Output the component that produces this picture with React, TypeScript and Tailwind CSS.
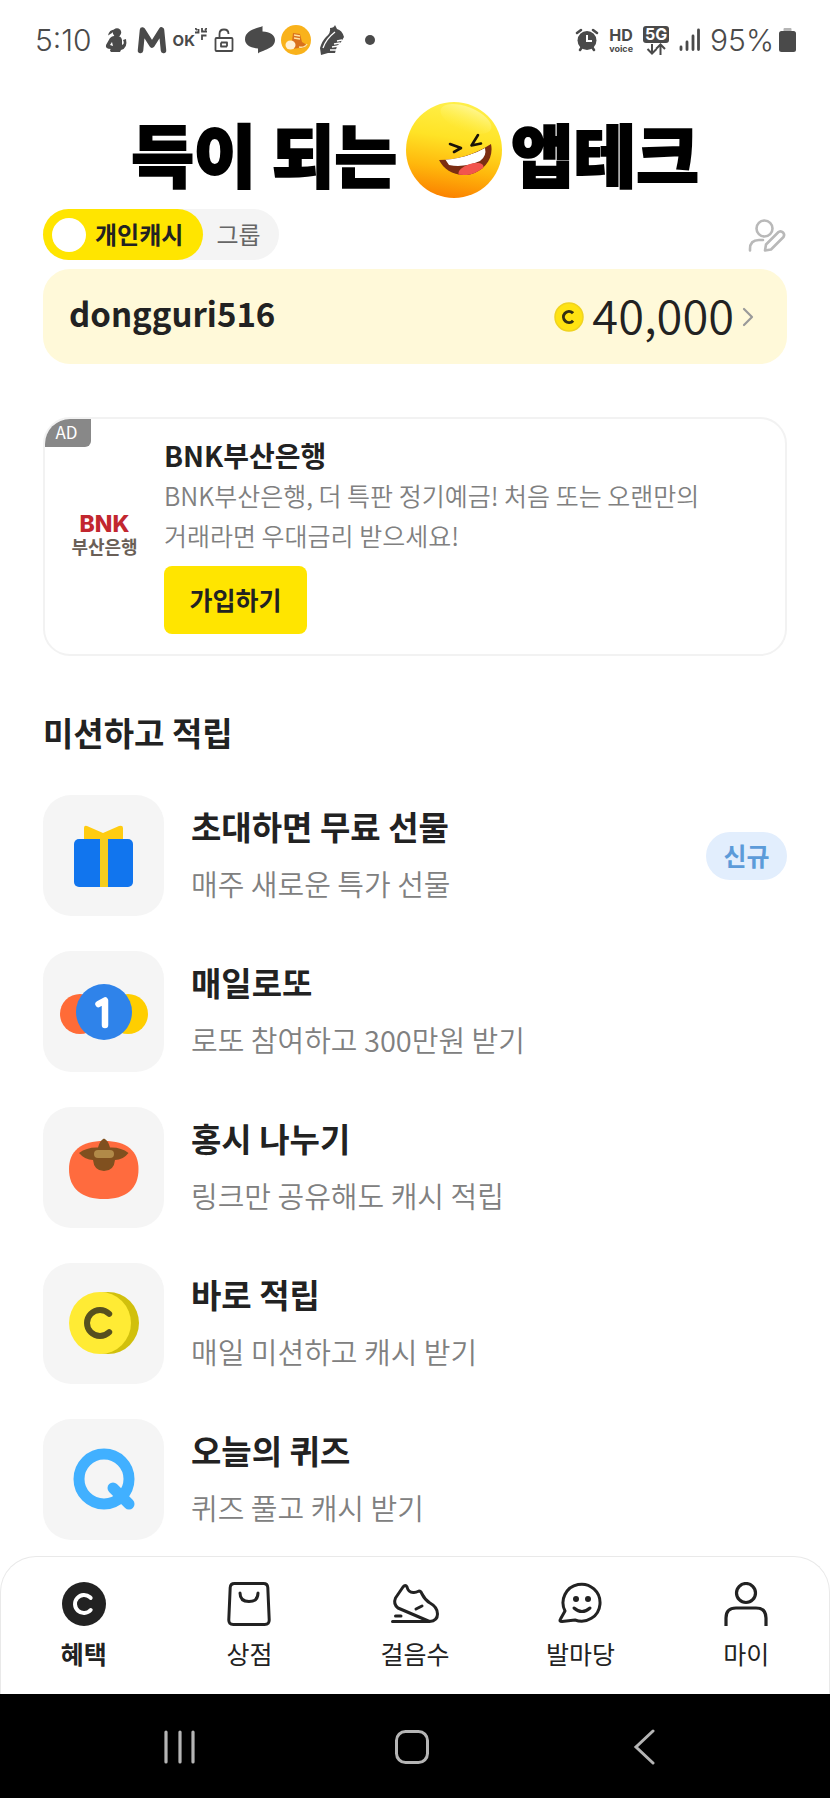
import React from 'react';

const fontKr = 'font-["Noto_Sans_CJK_KR",sans-serif]';

/* Status bar */

const LeftStatusIcons = () => (
  <div className="flex items-center text-[#4a4a4a]">
    <svg className="mx-[3px] h-[30px] w-[30px]" viewBox="0 0 30 30" fill="currentColor" aria-hidden="true">
      <circle cx="16" cy="7.500" r="4.200" />
      <path d="M14 4.500q-6 0-7 6l4-2.500z" />
      <path d="M13 11q7-1 8 4l0 5q3-1 1-5l3-1q2 9-5 11l-1 2H10q-2-2 0-3-6 0-5-4l4-7q2-2 4-2zm-2 6l-2 3 3 1z" fillRule="evenodd" />
    </svg>
    <svg className="mx-[3px] h-[30px] w-[30px]" viewBox="0 0 30 30" fill="none" stroke="currentColor" strokeWidth="5.500" strokeLinecap="round" strokeLinejoin="round" aria-hidden="true">
      <polyline points="3.500,25.500 5.500,5 15,20 24.500,5 26.500,25.500" />
    </svg>
    <div className="mx-[3px] flex h-[30px] w-[30px] items-center">
      <span className="font-[Inter,sans-serif] text-[15px] leading-none font-bold">OK</span>
      <svg className="mb-3 h-3 w-3 shrink-0" viewBox="0 0 12 12" fill="none" stroke="currentColor" strokeWidth="1.800" aria-hidden="true">
        <path d="M0 4.500h3.500V1M7 0v3.500h5M0 0l2 2M12 0l-2 2M7 12V7.500h4.500" />
      </svg>
    </div>
    <svg className="mx-[3px] h-[30px] w-[30px]" viewBox="0 0 30 30" fill="none" stroke="currentColor" strokeWidth="1.800" strokeLinejoin="round" aria-hidden="true">
      <rect x="6.500" y="13" width="17" height="13" rx="1" />
      <path d="M10.500 13V9q0-4.500 4.500-4.500T19.500 9M12 17.500h6v4M18 21.500h-6v-4" />
    </svg>
    <svg className="mx-[3px] h-[30px] w-[30px]" viewBox="0 0 30 30" fill="currentColor" aria-hidden="true">
      <path d="M17.500 1C15 3 0 4 0 14.500 0 20 6 23 13 23.500V28.500C17 25 30 24 30 15 30 10 25 7 17.500 6.500z" />
    </svg>
    <svg className="mx-[3px] h-[30px] w-[30px]" viewBox="0 0 30 30" aria-hidden="true">
      <circle cx="15" cy="15" r="15" fill="#f9b21b" />
      <path d="M12 8l7 1 2 8 5 3q-3 4-8 3l-8 1z" fill="#d9701c" />
      <path d="M18 22q6 1 8-3M13 10l6 1M13 13l6 1" stroke="#ffe5a3" strokeWidth="1.400" fill="none" />
      <ellipse cx="9.500" cy="20" rx="5" ry="4.500" fill="#fff0d5" />
    </svg>
    <svg className="mx-[3px] h-[30px] w-[30px]" viewBox="0 0 30 30" aria-hidden="true">
      <path d="M18 0l2 4q5 1 7 8l-3 5-4 4-2 7-7 0-7 2-1-7q2-7 6-11 5-4 4-9 4 0 5-3z" fill="currentColor" />
      <path d="M20 16l5-1M17 19l6-1M15 22l6-1M13 25h7M6 23q3-9 12-16" stroke="#fff" strokeWidth="1.300" fill="none" />
    </svg>
    <svg className="mx-[3px] h-[30px] w-[30px]" viewBox="0 0 30 30" fill="currentColor" aria-hidden="true">
      <circle cx="17" cy="15" r="5" />
    </svg>
  </div>
);

const StatusBar = () => (
  <div className="flex h-[80px] items-center justify-between pr-[34px] pl-[35px] text-[#4a4a4a]">
    <div className="flex items-center gap-[6px]">
      <span className="font-[Inter,sans-serif] text-[30px] leading-none font-light">5:10</span>
      <LeftStatusIcons />
    </div>
    <div className="flex items-center gap-[10px]">
      <svg className="h-6 w-6" viewBox="0 0 24 24" aria-hidden="true">
        <g stroke="currentColor" strokeWidth="2.600" strokeLinecap="round">
          <path d="M2 5l4-3M22 5l-4-3M5 22l2-3M19 22l-2-3" />
        </g>
        <circle cx="12" cy="12.500" r="9.500" fill="currentColor" />
        <path d="M12 7v6h5" stroke="#fff" strokeWidth="2" fill="none" />
      </svg>
      <div className="flex flex-col items-center font-[Inter,sans-serif] font-bold">
        <span className="text-[16px] leading-[16px]">HD</span>
        <span className="text-[9px] leading-[11px]">voice</span>
      </div>
      <div className="flex flex-col items-center">
        <span className="w-[26px] rounded-[3px] bg-[#4a4a4a] text-center font-[Inter,sans-serif] text-[16px] leading-[17px] font-bold text-white">5G</span>
        <svg className="h-3 w-5" viewBox="0 0 20 12" fill="none" stroke="currentColor" strokeWidth="2" aria-hidden="true">
          <path d="M6 1v9M1.500 6L6 10.500 10.500 6M14.500 12V2M10 6l4.500-4.500L19 6" />
        </svg>
      </div>
      <svg className="h-6 w-[21px]" viewBox="0 0 21 24" fill="none" stroke="currentColor" strokeWidth="2.800" strokeLinecap="round" aria-hidden="true">
        <path d="M2 19v2.500M8 14v7.500M14 8v13.500M19.500 2v19.500" />
      </svg>
      <div className="flex items-center gap-[5px]">
        <span className="font-[Inter,sans-serif] text-[30px] leading-none font-light">95%</span>
        <svg className="h-6 w-[17px]" viewBox="0 0 17 24" aria-hidden="true">
          <rect x="4.500" y="0" width="8" height="4" rx="1" fill="#b5b5b5" />
          <rect x="0" y="3" width="17" height="21" rx="2.500" fill="currentColor" />
        </svg>
      </div>
    </div>
  </div>
);

const LaughingFace = () => (
  <svg className="h-24 w-24" viewBox="0 0 96 96" aria-hidden="true">
    <defs>
      <linearGradient id="face" x1="0.600" y1="0" x2="0.450" y2="1">
        <stop offset="0" stopColor="#fff04a" />
        <stop offset="0.380" stopColor="#ffe326" />
        <stop offset="0.700" stopColor="#ffb80c" />
        <stop offset="1" stopColor="#fb8200" />
      </linearGradient>
      <linearGradient id="shine" x1="0" y1="0" x2="0" y2="1">
        <stop offset="0" stopColor="#fff9a8" stopOpacity="0.700" />
        <stop offset="1" stopColor="#fff35a" stopOpacity="0" />
      </linearGradient>
      <clipPath id="mouth">
        <path d="M33 58Q60 58 85 42C88 56 79 69 64 72.500 49 75 38 68 33 58z" />
      </clipPath>
    </defs>
    <circle cx="48" cy="48" r="48" fill="url(#face)" />
    <ellipse cx="60" cy="17" rx="27" ry="12" transform="rotate(22 60 17)" fill="url(#shine)" />
    <g clipPath="url(#mouth)">
      <rect x="30" y="38" width="60" height="40" fill="#7c2d12" />
      <path d="M39 57Q62 56 79 46 81 54 74 59 58 66 43 63z" fill="#fff" />
      <ellipse cx="65" cy="68" rx="13" ry="6" transform="rotate(-18 65 68)" fill="#f2554d" />
    </g>
    <path d="M44 42L55 46 48 50M72 33L65.500 43.500 75 41.500" fill="none" stroke="#1a1408" strokeWidth="2.600" strokeLinecap="round" strokeLinejoin="round" />
  </svg>
);

/* Mission icons */

const GiftIcon = () => (
  <svg viewBox="0 0 121 121" aria-hidden="true">
    <path d="M41 46V33q0-3 3-2l16 7 16-7q4-1 4 2v13z" fill="#ffcc11" />
    <rect x="31" y="44" width="59" height="48" rx="5" fill="#1175ee" />
    <rect x="57" y="43" width="8" height="49" fill="#f5cd1c" />
  </svg>
);

const LottoIcon = () => (
  <svg viewBox="0 0 121 121" aria-hidden="true">
    <circle cx="37" cy="63" r="20" fill="#ff6b37" />
    <circle cx="85" cy="63" r="20" fill="#ffce00" />
    <circle cx="61" cy="61" r="28" fill="#2f83ea" />
    <polyline points="55.500,53 62,49.500 62,74" fill="none" stroke="#fff" strokeWidth="6.500" strokeLinecap="round" strokeLinejoin="round" />
  </svg>
);

const PersimmonIcon = () => (
  <svg viewBox="0 0 121 121" aria-hidden="true">
    <path d="M61 34C84 34 95.500 44 95.500 62 95.500 82 83 92 61 92S26 82 26 62C26 44 38 34 61 34z" fill="#ff6b3e" />
    <path d="M61 31.500Q65 33 67 40.500 78 40 85.500 46 80 53 72 53 71 64 61 64T50 53Q42 53 36 46 44 40 55 40.500 57 33 61 31.500z" fill="#80501f" />
    <rect x="51" y="43" width="20" height="8" rx="4" fill="#b18a48" />
  </svg>
);

const CoinIcon = () => (
  <svg viewBox="0 0 121 121" aria-hidden="true">
    <circle cx="65" cy="60" r="31" fill="#d1c00c" />
    <circle cx="57" cy="60" r="31" fill="#ffeb34" />
    <circle cx="57" cy="60" r="13" fill="none" stroke="#56501f" strokeWidth="6" strokeLinecap="round" pathLength="360" strokeDasharray="270 90" transform="rotate(45 57 60)" />
  </svg>
);

const QuizIcon = () => (
  <svg viewBox="0 0 121 121" fill="none" stroke="#41b0ff" strokeWidth="11" strokeLinecap="round" aria-hidden="true">
    <circle cx="61" cy="60" r="25" />
    <line x1="70" y1="69" x2="86" y2="85" />
  </svg>
);

/* Bottom tab icons */

const BenefitIcon = () => (
  <svg className="h-11 w-12" viewBox="-2 0 48 44" aria-hidden="true">
    <circle cx="22" cy="22" r="22" fill="#222" />
    <circle cx="22" cy="22" r="9" fill="none" stroke="#fff" strokeWidth="4" strokeLinecap="round" pathLength="360" strokeDasharray="276 84" transform="rotate(42 22 22)" />
  </svg>
);

const ShopIcon = () => (
  <svg className="h-11 w-12" viewBox="-2 0 48 44" fill="none" stroke="#222" strokeWidth="3" strokeLinecap="round" aria-hidden="true">
    <path d="M7.500 1.500h29q4 0 4.300 4l1.400 32q.3 5-4.500 5H6.300q-4.800 0-4.500-5l1.400-32q.3-4 4.300-4z" />
    <path d="M13 11q0 8.500 9 8.500t9-8.500" />
  </svg>
);

const ShoeIcon = () => (
  <svg className="h-11 w-12" viewBox="0 0 48 44" fill="none" stroke="#222" strokeWidth="3" strokeLinecap="round" strokeLinejoin="round" aria-hidden="true">
    <path d="M1.500 39.500H38.500L7 26Q2 22 4.500 16L12 5q2.500-3 4 0 1.500 6 7 5.500 2 0 5-1.500 2 0 3 3 3 6 8 9 7.500 4 7.500 11 0 7-8 7.500" />
    <path d="M25 27l6-3M4.500 34H10" />
  </svg>
);

const ChatIcon = () => (
  <svg className="h-11 w-12" viewBox="-2 0 48 44" fill="none" stroke="#222" strokeWidth="3" strokeLinecap="round" strokeLinejoin="round" aria-hidden="true">
    <path d="M6 29A18.500 18.500 0 1 1 16 38L3 39.500Q0 39.500 1.500 37z" />
    <path d="M15 26q8 7 16 0" />
    <circle cx="17" cy="17" r="3" fill="#222" stroke="none" />
    <circle cx="29" cy="17" r="3" fill="#222" stroke="none" />
  </svg>
);

const MyIcon = () => (
  <svg className="h-11 w-12" viewBox="-2 0 48 44" fill="none" stroke="#222" strokeWidth="3.200" aria-hidden="true">
    <circle cx="22" cy="11" r="9.500" />
    <path d="M2 44v-8q0-10 10-10h20q10 0 10 10v8" />
  </svg>
);

const missions = [
  { title: '초대하면 무료 선물', text: '매주 새로운 특가 선물', icon: <GiftIcon />, badge: '신규' },
  { title: '매일로또', text: '로또 참여하고 300만원 받기', icon: <LottoIcon /> },
  { title: '홍시 나누기', text: '링크만 공유해도 캐시 적립', icon: <PersimmonIcon /> },
  { title: '바로 적립', text: '매일 미션하고 캐시 받기', icon: <CoinIcon /> },
  { title: '오늘의 퀴즈', text: '퀴즈 풀고 캐시 받기', icon: <QuizIcon /> },
];

const tabs = [
  { label: '혜택', icon: <BenefitIcon />, active: true },
  { label: '상점', icon: <ShopIcon /> },
  { label: '걸음수', icon: <ShoeIcon /> },
  { label: '발마당', icon: <ChatIcon /> },
  { label: '마이', icon: <MyIcon /> },
];

const App: React.FC = () => {
  return (
    <div className={`flex min-h-screen flex-col bg-white text-[#222] ${fontKr}`}>
      <StatusBar />

      <main className="flex-1 px-[43px] pt-[21px] pb-4">
        <h1 className="flex h-[98px] items-center justify-center gap-[9px] text-[68px] leading-none font-black whitespace-nowrap text-black [-webkit-text-stroke:2px_black]">
          <span className="pt-[6px]">득이 되는</span>
          <LaughingFace />
          <span className="pt-[6px]">앱테크</span>
        </h1>

        {/* Cash type switch */}
        <div className="mt-[10px] flex items-center justify-between">
          <div className="flex h-[51px] rounded-full bg-[#f4f4f4] text-[24px]">
            <button type="button" aria-pressed="true" className="flex w-[160px] items-center gap-[9px] rounded-full bg-[#ffe500] pl-[9px] font-bold">
              <span className="h-[34px] w-[34px] rounded-full bg-white" />
              <span className="pb-[2px]">개인캐시</span>
            </button>
            <button type="button" aria-pressed="false" className="w-[76px] pr-[5px] pb-[2px] text-[#666]">그룹</button>
          </div>
          <button type="button" aria-label="프로필 수정">
            <svg className="h-9 w-10" viewBox="0 0 40 36" fill="none" stroke="#b9b9b9" strokeWidth="2.600" strokeLinecap="round" strokeLinejoin="round" aria-hidden="true">
              <circle cx="17.500" cy="11.500" r="8" />
              <path d="M3 33.500V32q0-9 9-9h4" />
              <path d="M18 33.500l1-6L31.500 15q2.500-1.500 4.500.5t.5 4.500L24 32.500z" />
            </svg>
          </button>
        </div>

        {/* Balance */}
        <section className="mt-[9px] flex h-[95px] items-center justify-between rounded-[27px] bg-[#fff9d9] pr-[33px] pl-[26px]">
          <span className="pb-[6px] text-[33px] leading-none font-bold">dongguri516</span>
          <a href="#cash" className="flex items-center gap-2">
            <svg className="h-[30px] w-[30px]" viewBox="0 0 30 30" aria-hidden="true">
              <circle cx="15" cy="15" r="14" fill="#ffe312" stroke="#f0d321" strokeWidth="1.500" />
              <circle cx="15" cy="15" r="5.500" fill="none" stroke="#332f12" strokeWidth="3" pathLength="360" strokeDasharray="275 85" transform="rotate(42 15 15)" />
            </svg>
            <span className="pb-[6px] text-[47px] leading-none font-[350]">40,000</span>
            <svg className="h-5 w-3" viewBox="0 0 12 20" fill="none" stroke="#999" strokeWidth="2.200" strokeLinecap="round" strokeLinejoin="round" aria-hidden="true">
              <path d="M2 2l8 8-8 8" />
            </svg>
          </a>
        </section>

        {/* Ad banner */}
        <section className="relative mt-[53px] flex items-center overflow-hidden rounded-[27px] border-2 border-[#f2f2f2] pt-4 pb-5">
          <span className="absolute top-0 left-0 h-[28px] w-[46px] rounded-br-[6px] bg-[#888] pr-[3px] text-center text-[17px] leading-[26px] text-white">AD</span>
          <div className="flex w-[119px] shrink-0 flex-col items-center">
            <span className="font-[Inter,sans-serif] text-[23px] leading-[23px] font-extrabold text-[#c2272f]">BNK</span>
            <span className="text-[18px] leading-[20px] font-bold text-[#6a5f57]">부산은행</span>
          </div>
          <div>
            <h2 className="text-[28px] leading-[40px] font-bold">BNK부산은행</h2>
            <p className="w-[540px] max-w-full text-[25px] leading-[40px] font-[350] break-keep text-[#808080]">
              BNK부산은행, 더 특판 정기예금! 처음 또는 오랜만의 거래라면 우대금리 받으세요!
            </p>
            <button type="button" className="mt-[11px] h-[68px] w-[143px] rounded-lg bg-[#ffe500] text-[25px] font-bold">가입하기</button>
          </div>
        </section>

        {/* Missions */}
        <h2 className="mt-[56px] text-[33px] leading-[40px] font-bold">미션하고 적립</h2>
        <ul className="mt-[43px] flex flex-col gap-[35px]">
          {missions.map((mission) => (
            <li key={mission.title}>
              <a href="#mission" className="flex items-center">
                <div className="h-[121px] w-[121px] shrink-0 rounded-[28px] bg-[#f5f5f5]">{mission.icon}</div>
                <div className="ml-[27px] flex-1 pb-1">
                  <h3 className="text-[33px] leading-[40px] font-bold">{mission.title}</h3>
                  <p className="mt-[19px] text-[29px] leading-[36px] font-[350] text-[#808080]">{mission.text}</p>
                </div>
                {mission.badge && (
                  <span className="flex h-12 w-[81px] items-center justify-center rounded-full bg-[#e2eefd] text-[25px] font-bold text-[#5c9bd9]">
                    {mission.badge}
                  </span>
                )}
              </a>
            </li>
          ))}
        </ul>
      </main>

      <nav className="grid grid-cols-5 rounded-t-[36px] border border-b-0 border-[#e9e9e9] bg-white pt-[25px] pb-[25px]">
        {tabs.map((tab) => (
          <a key={tab.label} href="#tab" className="flex flex-col items-center gap-[11px]">
            {tab.icon}
            <span className={tab.active ? 'text-[25px] leading-[32px] font-bold' : 'text-[25px] leading-[32px]'}>{tab.label}</span>
          </a>
        ))}
      </nav>

      {/* System navigation */}
      <div className="flex h-[104px] items-center justify-center bg-black pt-[2px] pr-[6px]">
        <button type="button" aria-label="최근 앱" className="flex w-[28%] justify-center">
          <svg className="h-9 w-9" viewBox="0 0 36 36" stroke="#b5b5b5" strokeWidth="3.200" strokeLinecap="round" aria-hidden="true">
            <path d="M3 3v30M17 3v30M30 3v30" />
          </svg>
        </button>
        <button type="button" aria-label="홈" className="flex w-[28%] justify-center">
          <svg className="h-9 w-9" viewBox="0 0 36 36" fill="none" stroke="#b5b5b5" strokeWidth="3" aria-hidden="true">
            <rect x="2.500" y="2.500" width="31" height="31" rx="9" />
          </svg>
        </button>
        <button type="button" aria-label="뒤로" className="flex w-[28%] justify-center">
          <svg className="h-9 w-9" viewBox="0 0 36 36" fill="none" stroke="#b5b5b5" strokeWidth="3" strokeLinecap="round" aria-hidden="true">
            <path d="M28 2L11 18l17 16" />
          </svg>
        </button>
      </div>
    </div>
  );
};

export default App;
